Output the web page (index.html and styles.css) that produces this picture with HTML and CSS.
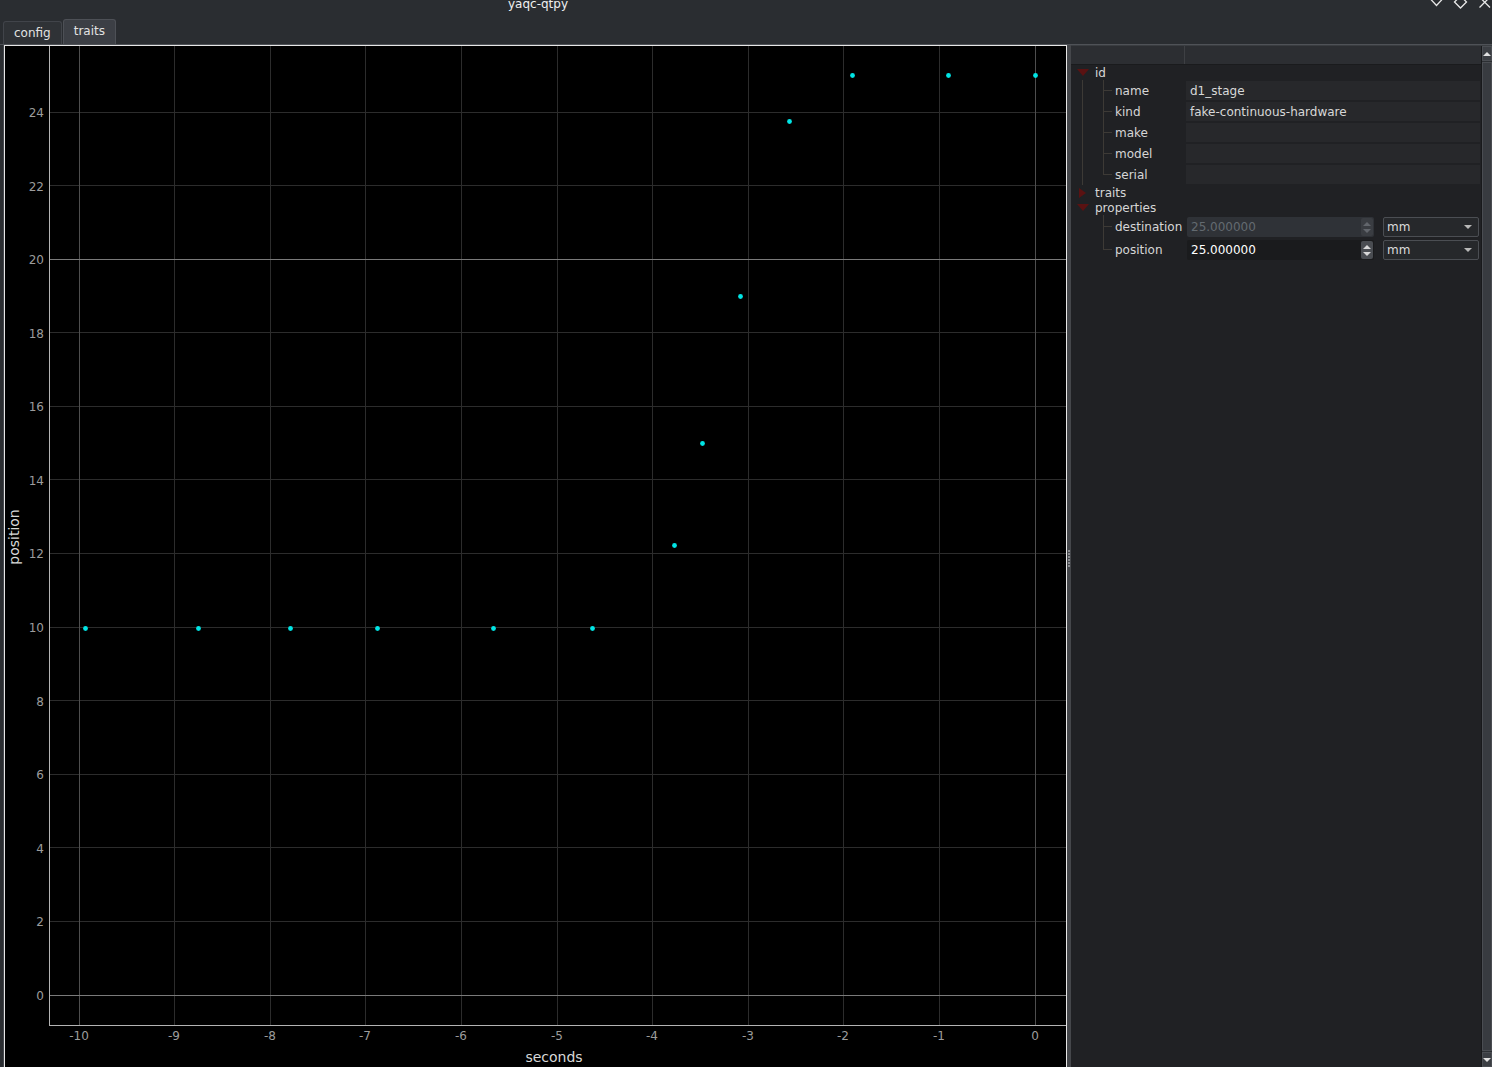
FILE: index.html
```html
<!DOCTYPE html>
<html>
<head>
<meta charset="utf-8">
<title>yaqc-qtpy</title>
<link rel="stylesheet" href="styles.css">
</head>
<body>
<div class="window">
  <header class="titlebar">
    <div class="title">yaqc-qtpy</div>
    <svg class="win-buttons" width="72" height="12" viewBox="0 0 72 12">
      <polyline points="10.5,-1 16.5,5.5 22.5,-1" fill="none" stroke="#e8e8e8" stroke-width="1.3"/>
      <polygon points="34.5,2 40.5,-4 46.5,2 40.5,8" fill="none" stroke="#e8e8e8" stroke-width="1.3"/>
      <path d="M59.5 -3 L70 7.5 M70 -3 L59.5 7.5" stroke="#e8e8e8" stroke-width="1.3"/>
    </svg>
  </header>

  <nav class="tabbar">
    <div class="tab">config</div>
    <div class="tab active">traits</div>
  </nav>

  <main class="content">
    <div class="pane-edge">
      <section class="plot">
        <svg class="chart" width="1061" height="1021" viewBox="5 46 1061 1021">
          <g class="grid-minor" stroke="#2c2c2c" stroke-width="1">
            <line x1="174.5" y1="46" x2="174.5" y2="1025"/>
            <line x1="270.5" y1="46" x2="270.5" y2="1025"/>
            <line x1="365.5" y1="46" x2="365.5" y2="1025"/>
            <line x1="461.5" y1="46" x2="461.5" y2="1025"/>
            <line x1="557.5" y1="46" x2="557.5" y2="1025"/>
            <line x1="652.5" y1="46" x2="652.5" y2="1025"/>
            <line x1="748.5" y1="46" x2="748.5" y2="1025"/>
            <line x1="843.5" y1="46" x2="843.5" y2="1025"/>
            <line x1="939.5" y1="46" x2="939.5" y2="1025"/>
            <line x1="49" y1="921.5" x2="1066" y2="921.5"/>
            <line x1="49" y1="847.5" x2="1066" y2="847.5"/>
            <line x1="49" y1="774.5" x2="1066" y2="774.5"/>
            <line x1="49" y1="700.5" x2="1066" y2="700.5"/>
            <line x1="49" y1="627.5" x2="1066" y2="627.5"/>
            <line x1="49" y1="553.5" x2="1066" y2="553.5"/>
            <line x1="49" y1="479.5" x2="1066" y2="479.5"/>
            <line x1="49" y1="406.5" x2="1066" y2="406.5"/>
            <line x1="49" y1="332.5" x2="1066" y2="332.5"/>
            <line x1="49" y1="185.5" x2="1066" y2="185.5"/>
            <line x1="49" y1="112.5" x2="1066" y2="112.5"/>
          </g>
          <g class="grid-major" stroke="#4e4e4e" stroke-width="1">
            <line x1="79.5" y1="46" x2="79.5" y2="1025"/>
            <line x1="1035.5" y1="46" x2="1035.5" y2="1025"/>
          </g>
          <g class="grid-major-h" stroke="#7a7a7a" stroke-width="1">
            <line x1="49" y1="995.5" x2="1066" y2="995.5"/>
            <line x1="49" y1="259.5" x2="1066" y2="259.5"/>
          </g>
          <g class="axes" stroke="#b4b4b4" stroke-width="1">
            <line x1="49.5" y1="46" x2="49.5" y2="1025.5"/>
            <line x1="49" y1="1025.5" x2="1066" y2="1025.5"/>
          </g>
          <g class="yticks" fill="#9c9c9c" font-size="12" text-anchor="end" dominant-baseline="central">
            <text x="44" y="113">24</text>
            <text x="44" y="187">22</text>
            <text x="44" y="260">20</text>
            <text x="44" y="334">18</text>
            <text x="44" y="407">16</text>
            <text x="44" y="481">14</text>
            <text x="44" y="554">12</text>
            <text x="44" y="628">10</text>
            <text x="44" y="702">8</text>
            <text x="44" y="775">6</text>
            <text x="44" y="849">4</text>
            <text x="44" y="922">2</text>
            <text x="44" y="996">0</text>
          </g>
          <g class="xticks" fill="#9c9c9c" font-size="12" text-anchor="middle" dominant-baseline="central">
            <text x="79" y="1036">-10</text>
            <text x="174" y="1036">-9</text>
            <text x="270" y="1036">-8</text>
            <text x="365" y="1036">-7</text>
            <text x="461" y="1036">-6</text>
            <text x="557" y="1036">-5</text>
            <text x="652" y="1036">-4</text>
            <text x="748" y="1036">-3</text>
            <text x="843" y="1036">-2</text>
            <text x="939" y="1036">-1</text>
            <text x="1035" y="1036">0</text>
          </g>
          <text class="axis-label" x="554" y="1057" text-anchor="middle" dominant-baseline="central">seconds</text>
          <text class="axis-label" x="14" y="537" text-anchor="middle" dominant-baseline="central" transform="rotate(-90 14 537)">position</text>
          <g class="points" fill="#00e5e5">
            <circle cx="85.5" cy="628.5" r="2.4"/>
            <circle cx="198.5" cy="628.5" r="2.4"/>
            <circle cx="290.5" cy="628.5" r="2.4"/>
            <circle cx="377.5" cy="628.5" r="2.4"/>
            <circle cx="493.5" cy="628.5" r="2.4"/>
            <circle cx="592.5" cy="628.5" r="2.4"/>
            <circle cx="674.5" cy="545.5" r="2.4"/>
            <circle cx="702.5" cy="443.5" r="2.4"/>
            <circle cx="740.5" cy="296.5" r="2.4"/>
            <circle cx="789.5" cy="121.5" r="2.4"/>
            <circle cx="852.5" cy="75.5" r="2.4"/>
            <circle cx="948.5" cy="75.5" r="2.4"/>
            <circle cx="1035.5" cy="75.5" r="2.4"/>
          </g>
        </svg>
      </section>
    </div>

    <div class="splitter">
      <div class="grip"><i></i><i></i><i></i><i></i><i></i><i></i></div>
    </div>

    <aside class="panel">
      <div class="tree">
        <div class="tree-header">
          <div class="hcol first"></div>
          <div class="hcol"></div>
        </div>
        <div class="tree-body">
          <div class="row parent"><span class="arrow down"></span><span>id</span></div>
          <div class="row child">
            <div class="label g-id">name</div>
            <div class="value"><div class="field">d1_stage</div></div>
          </div>
          <div class="row child">
            <div class="label g-id">kind</div>
            <div class="value"><div class="field">fake-continuous-hardware</div></div>
          </div>
          <div class="row child">
            <div class="label g-id">make</div>
            <div class="value"><div class="field"></div></div>
          </div>
          <div class="row child">
            <div class="label g-id">model</div>
            <div class="value"><div class="field"></div></div>
          </div>
          <div class="row child">
            <div class="label g-id-last">serial</div>
            <div class="value"><div class="field"></div></div>
          </div>
          <div class="row parent"><span class="arrow right"></span><span>traits</span></div>
          <div class="row parent"><span class="arrow down"></span><span>properties</span></div>
          <div class="row prop">
            <div class="label g-prop">destination</div>
            <div class="value">
              <div class="spin disabled">
                <span class="spin-text">25.000000</span>
                <span class="spin-btns"><i class="up"></i><i class="dn"></i></span>
              </div>
              <div class="combo"><span>mm</span><i class="caret"></i></div>
            </div>
          </div>
          <div class="row prop">
            <div class="label g-prop-last">position</div>
            <div class="value">
              <div class="spin">
                <span class="spin-text">25.000000</span>
                <span class="spin-btns"><i class="up"></i><i class="dn"></i></span>
              </div>
              <div class="combo"><span>mm</span><i class="caret"></i></div>
            </div>
          </div>
        </div>
      </div>
      <div class="scrollbar">
        <div class="sb-btn"><i class="tri-up"></i></div>
        <div class="sb-handle"></div>
        <div class="sb-btn"><i class="tri-down"></i></div>
      </div>
    </aside>
  </main>
</div>
</body>
</html>
```

FILE: styles.css
```css
* { box-sizing: border-box; }

html, body {
  margin: 0;
  padding: 0;
  background: #2a2d31;
}

body {
  width: 1492px;
  height: 1067px;
  overflow: hidden;
  font-family: "DejaVu Sans", sans-serif;
  font-size: 12px;
  color: #d6d6d6;
}

.window {
  display: flex;
  flex-direction: column;
  width: 1492px;
  height: 1067px;
}

/* ---------- title bar ---------- */
.titlebar {
  display: flex;
  align-items: flex-start;
  height: 19px;
  flex: none;
  overflow: hidden;
}

.title {
  width: 1076px;
  text-align: center;
  color: #f0f0f0;
  line-height: 14px;
  margin-top: -3px;
}

.win-buttons {
  margin-left: auto;
  display: block;
}

/* ---------- tabs ---------- */
.tabbar {
  display: flex;
  align-items: flex-end;
  gap: 1px;
  height: 26px;
  padding-left: 3px;
  border-bottom: 1px solid #4f5257;
  flex: none;
}

.tab {
  height: 23px;
  padding: 0 10px;
  line-height: 23px;
  background: #2f3236;
  border: 1px solid #41444a;
  border-bottom: none;
  border-radius: 3px 3px 0 0;
  color: #e2e2e2;
}

.tab.active {
  height: 25px;
  line-height: 23px;
  background: #3c3f45;
  border-color: #4d5056;
}

/* ---------- content ---------- */
.content {
  display: flex;
  flex: 1;
  min-height: 0;
  padding-left: 3px;
}

.pane-edge {
  border-left: 1px solid #44474c;
  display: flex;
}

.plot {
  width: 1063px;
  height: 1030px;
  border: 1px solid #e6e6e6;
  background: #000;
}

.chart {
  display: block;
  font-family: "DejaVu Sans", sans-serif;
}

.axis-label {
  fill: #d8d8d8;
  font-size: 14px;
}

.splitter {
  width: 4px;
  flex: none;
  background: #45474b;
  display: flex;
  align-items: center;
  justify-content: center;
}

.grip {
  display: flex;
  flex-direction: column;
  gap: 1px;
  margin-top: 4px;
}

.grip i {
  display: block;
  width: 2px;
  height: 2px;
  background: #8a8c90;
}

/* ---------- right panel ---------- */
.panel {
  flex: 1;
  display: flex;
  border-top: 1px solid #3a3d41;
  background: #202124;
  min-width: 0;
}

.tree {
  flex: 1;
  display: flex;
  flex-direction: column;
  min-width: 0;
}

.tree-header {
  display: flex;
  height: 19px;
  background: #2c2e32;
  border-bottom: 1px solid #1a1b1d;
  flex: none;
}

.hcol.first {
  width: 114px;
  border-right: 1px solid #3e4044;
}

.tree-body {
  --lc: #3d3a36;
}

.row {
  display: flex;
  align-items: center;
}

.row.parent {
  height: 15px;
  padding-left: 6px;
  line-height: 16px;
}

.row.parent > span:last-child {
  margin-left: 6px;
}

.arrow {
  display: inline-block;
  width: 12px;
  height: 8px;
}

.arrow.down::before,
.arrow.right::before {
  content: "";
  display: block;
  width: 0;
  height: 0;
}

.arrow.down::before {
  border-left: 6px solid transparent;
  border-right: 6px solid transparent;
  border-top: 7px solid #5a1212;
}

.arrow.right {
  height: 10px;
}

.arrow.right::before {
  margin-left: 2px;
  border-top: 5px solid transparent;
  border-bottom: 5px solid transparent;
  border-left: 7px solid #5a1212;
}

.row.child {
  height: 21px;
}

.row.prop {
  height: 23px;
}

.label {
  width: 115px;
  height: 100%;
  flex: none;
  padding-left: 44px;
  display: flex;
  align-items: center;
  white-space: nowrap;
}

.g-id {
  background:
    linear-gradient(var(--lc), var(--lc)) 11px 0 / 1px 100% no-repeat,
    linear-gradient(var(--lc), var(--lc)) 32px 0 / 1px 100% no-repeat,
    linear-gradient(var(--lc), var(--lc)) 33px 10px / 8px 1px no-repeat;
}

.g-id-last {
  background:
    linear-gradient(var(--lc), var(--lc)) 11px 0 / 1px 100% no-repeat,
    linear-gradient(var(--lc), var(--lc)) 32px 0 / 1px 11px no-repeat,
    linear-gradient(var(--lc), var(--lc)) 33px 10px / 8px 1px no-repeat;
}

.g-prop {
  background:
    linear-gradient(var(--lc), var(--lc)) 32px 0 / 1px 100% no-repeat,
    linear-gradient(var(--lc), var(--lc)) 33px 11px / 8px 1px no-repeat;
}

.g-prop-last {
  background:
    linear-gradient(var(--lc), var(--lc)) 32px 0 / 1px 12px no-repeat,
    linear-gradient(var(--lc), var(--lc)) 33px 11px / 8px 1px no-repeat;
}

.value {
  flex: 1;
  height: 100%;
  min-width: 0;
  padding-right: 1px;
  display: flex;
  align-items: flex-start;
}

.field {
  flex: 1;
  height: 19px;
  margin-top: 1px;
  background: #27282b;
  padding-left: 4px;
  line-height: 20px;
  color: #d8d8d8;
  white-space: nowrap;
}

.spin {
  width: 187px;
  height: 20px;
  margin-top: 2px;
  margin-left: 1px;
  display: flex;
  align-items: center;
  background: #1a1b1d;
  border-radius: 2px;
  color: #ffffff;
}

.spin.disabled {
  background: #2f3237;
  color: #636a70;
}

.spin-text {
  flex: 1;
  padding-left: 4px;
  line-height: 20px;
}

.spin-btns {
  width: 12px;
  height: 18px;
  margin-right: 1px;
  background: #4a4d52;
  border-radius: 2px;
  display: flex;
  flex-direction: column;
  align-items: center;
  justify-content: center;
  gap: 3px;
}

.spin.disabled .spin-btns {
  background: #3a3d42;
}

.spin-btns i {
  display: block;
  width: 0;
  height: 0;
  border-left: 4px solid transparent;
  border-right: 4px solid transparent;
}

.spin-btns .up { border-bottom: 4px solid #d8d8d8; }
.spin-btns .dn { border-top: 4px solid #d8d8d8; }
.spin.disabled .spin-btns .up { border-bottom-color: #62666c; }
.spin.disabled .spin-btns .dn { border-top-color: #62666c; }

.combo {
  flex: 1;
  height: 20px;
  margin-top: 2px;
  margin-left: 9px;
  margin-right: 1px;
  border: 1px solid #4b4e53;
  border-radius: 2px;
  background: #26282b;
  display: flex;
  align-items: center;
  padding-left: 3px;
  padding-right: 6px;
  color: #dcdcdc;
}

.combo span {
  flex: 1;
  line-height: 18px;
}

.caret {
  display: block;
  width: 0;
  height: 0;
  border-left: 4px solid transparent;
  border-right: 4px solid transparent;
  border-top: 4px solid #b8b8b8;
}

/* ---------- scrollbar ---------- */
.scrollbar {
  width: 11px;
  flex: none;
  border-left: 1px solid #18191b;
  display: flex;
  flex-direction: column;
  background: #2c2f33;
}

.sb-btn {
  height: 15px;
  flex: none;
  background: #3b3e43;
  display: flex;
  align-items: center;
  justify-content: center;
  border: 1px solid #4a4d52;
}

.sb-handle {
  flex: 1;
  background: #383b40;
  border: 1px solid #4a4d52;
  margin: 1px 0;
}

.tri-up, .tri-down {
  display: block;
  width: 0;
  height: 0;
  border-left: 4px solid transparent;
  border-right: 4px solid transparent;
}

.tri-up { border-bottom: 4px solid #e0e0e0; }
.tri-down { border-top: 4px solid #e0e0e0; }
```
